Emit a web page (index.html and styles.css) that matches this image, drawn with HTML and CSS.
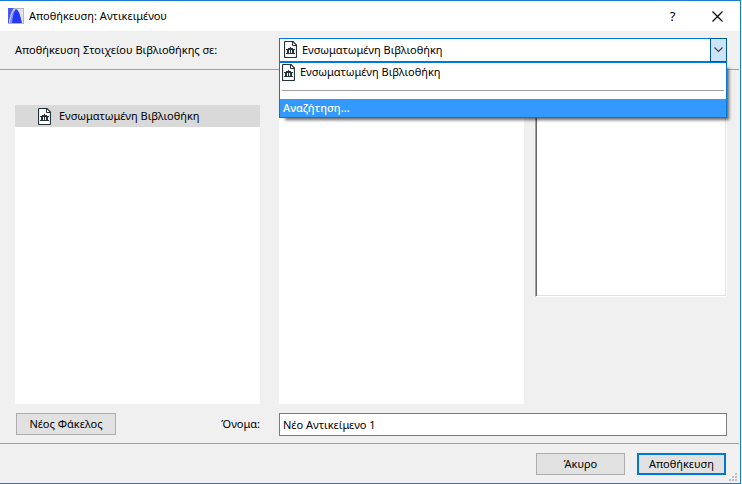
FILE: index.html
```html
<!DOCTYPE html>
<html lang="el">
<head>
  <meta charset="UTF-8">
  <meta name="viewport" content="width=device-width, initial-scale=1.0">
  <title>Αποθήκευση: Αντικειμένου</title>
  <link rel="stylesheet" href="styles.css">
</head>
<body>
  <!-- Shared library icon -->
  <svg class="sprite" aria-hidden="true">
    <symbol id="library" viewBox="0 0 13 17">
      <path d="M1.5 .5H9L12.5 4V15.5Q12.5 16.5 11.5 16.5H1.5Q.5 16.5 .5 15.5V1.5Q.5 .5 1.5 .5Z" fill="#fff" stroke="#25323a" stroke-width="1.2"/>
      <path d="M8.5 1V4.5H12" fill="none" stroke="#25323a"/>
      <path d="M6 6H7V7H9V8H11V9H2V8H4V7H6ZM3 9H5V12H3ZM6 9H7V12H6ZM8 9H10V12H8ZM2 12H11V13H2Z" fill="#25323a"/>
    </symbol>
  </svg>

  <div class="dialog">
    <!-- Title bar -->
    <header class="titlebar">
      <svg class="app-icon" viewBox="0 0 16 16" aria-hidden="true">
        <rect x=".5" y=".5" width="15" height="15" fill="#e2e3ec" stroke="#b3b5c2"/>
        <path d="M0 0H6Q2 5 1 15H0Z" fill="#4a58f0"/>
        <path d="M1 15Q2 4 7 1L5 15Z" fill="#7c8af5"/>
        <path d="M4 15Q6 1 8 1Q11 1 14 15Z" fill="#2438f5"/>
        <path d="M1.5 15Q3 4 7 1.5" fill="none" stroke="#c3c9ff"/>
      </svg>
      <h1>Αποθήκευση: Αντικειμένου</h1>
      <button class="window-btn" type="button" aria-label="Βοήθεια">?</button>
      <button class="window-btn" type="button" aria-label="Κλείσιμο">
        <svg width="11" height="11" viewBox="0 0 11 11"><path d="M.5 .5L10.5 10.5M10.5 .5L.5 10.5" stroke="#000" stroke-width="1.2"/></svg>
      </button>
    </header>

    <!-- Location -->
    <div class="location">
      <label for="location">Αποθήκευση Στοιχείου Βιβλιοθήκης σε:</label>
      <div class="combo">
        <select id="location">
          <option>Ενσωματωμένη Βιβλιοθήκη</option>
          <option>Αναζήτηση...</option>
        </select>
        <svg class="library-icon combo-icon" aria-hidden="true"><use href="#library"/></svg>
        <span class="combo-arrow">
          <svg width="9" height="6" viewBox="0 0 9 6"><path d="M.5 .5L4.5 4.5L8.5 .5" fill="none" stroke="#444" stroke-width="1.2"/></svg>
        </span>
        <ul class="combo-list" role="listbox" aria-label="Θέση">
          <li role="option">
            <svg class="library-icon" aria-hidden="true"><use href="#library"/></svg>
            Ενσωματωμένη Βιβλιοθήκη
          </li>
          <li class="separator" role="presentation"></li>
          <li class="active" role="option" aria-selected="true">Αναζήτηση...</li>
        </ul>
      </div>
    </div>

    <!-- Folder panes -->
    <main class="panes">
      <ul class="pane">
        <li class="folder selected">
          <svg class="library-icon" aria-hidden="true"><use href="#library"/></svg>
          Ενσωματωμένη Βιβλιοθήκη
        </li>
      </ul>
      <div class="pane pane-files"></div>
      <div class="preview"></div>
    </main>

    <!-- Name -->
    <div class="name-row">
      <div class="name-left">
        <button class="btn btn-folder" type="button">Νέος Φάκελος</button>
        <label for="name">Όνομα:</label>
      </div>
      <input type="text" id="name" value="Νέο Αντικείμενο 1">
    </div>

    <!-- Actions -->
    <footer class="actions">
      <button class="btn" type="button">Άκυρο</button>
      <button class="btn btn-default" type="submit">Αποθήκευση</button>
      <svg class="grip" viewBox="0 0 8 8" aria-hidden="true"><path d="M6 0H8V2H6ZM3 3H5V5H3ZM6 3H8V5H6ZM0 6H2V8H0ZM3 6H5V8H3ZM6 6H8V8H6Z" fill="#bfbfbf"/></svg>
    </footer>
  </div>
</body>
</html>
```
FILE: styles.css
```css
* {
  box-sizing: border-box;
}

body {
  margin: 0;
  padding-right: 1px;
  background: #f0f0f0;
  color: #000;
  font: 11px/16px "Noto Sans", "Open Sans", sans-serif;
}

ul {
  margin: 0;
  padding: 0;
  list-style: none;
}

button,
input,
select {
  font: inherit;
  color: inherit;
}

.sprite {
  position: absolute;
  width: 0;
  height: 0;
}

.dialog {
  display: flex;
  flex-direction: column;
  min-height: 100vh;
  background: #f0f0f0;
  border: solid #1a7bd0;
  border-width: 1px 1px 1px 0;
}

/* Title bar */
.titlebar {
  display: flex;
  align-items: center;
  height: 30px;
  padding-left: 8px;
  background: #fff;
}

.titlebar h1 {
  flex: 1;
  margin: 0 0 0 5px;
  font-size: 11px;
  font-weight: normal;
}

.app-icon {
  width: 16px;
  height: 16px;
}

.window-btn {
  display: flex;
  align-items: center;
  justify-content: center;
  width: 45px;
  height: 30px;
  padding: 0;
  border: none;
  background: none;
  font-size: 13px;
}

/* Location */
.location {
  display: grid;
  grid-template-columns: 264fr 448fr;
  align-items: center;
  height: 39px;
  margin-right: 1px;
  padding: 0 12px 0 15px;
  border-bottom: 1px solid #a0a0a0;
}

.library-icon {
  flex: none;
  width: 13px;
  height: 17px;
}

.combo {
  position: relative;
}

.combo select {
  display: block;
  width: 100%;
  height: 24px;
  padding: 0 22px;
  border: 1px solid #0078d7;
  border-radius: 0;
  background: #fff;
  appearance: none;
}

.combo-icon {
  position: absolute;
  top: 3px;
  left: 5px;
}

.combo-arrow {
  position: absolute;
  top: 0;
  right: 0;
  display: flex;
  align-items: center;
  justify-content: center;
  width: 17px;
  height: 24px;
  border: 1px solid #00559b;
  background: #cce4f7;
  pointer-events: none;
}

.combo-list {
  position: absolute;
  z-index: 1;
  top: 24px;
  left: 0;
  right: 0;
  border: 1px solid #0078d7;
  background: #fff;
  box-shadow: 4px 4px 3px -2px rgba(0, 0, 0, 0.6);
}

.combo-list li {
  display: flex;
  align-items: center;
  gap: 5px;
  height: 18px;
  padding: 0 2px;
}

.combo-list .separator::before {
  content: "";
  flex: 1;
  height: 1px;
  background: #a0a0a0;
}

.combo-list .active {
  padding: 0 3px;
  background: #3399ff;
  color: #fff;
  font-weight: 500;
}

/* Panes */
.panes {
  flex: 1;
  display: grid;
  grid-template-columns: 245fr 264fr 203fr;
  padding: 35px 13px 0 15px;
}

.pane {
  background: #fff;
}

.pane-files {
  margin-left: 19px;
}

.preview {
  height: 192px;
  margin-left: 11px;
  border: 1px solid;
  border-color: #a0a0a0 #fff #fff #a0a0a0;
  background: #fff;
  box-shadow: inset 1px 1px #696969, inset -1px -1px #e3e3e3;
}

.folder {
  display: flex;
  align-items: center;
  gap: 8px;
  height: 22px;
  padding-left: 23px;
}

.folder.selected {
  background: #d9d9d9;
}

/* Name */
.name-row {
  display: grid;
  grid-template-columns: 264fr 448fr;
  margin-right: 1px;
  padding: 9px 12px 7px 15px;
  border-bottom: 1px solid #a0a0a0;
}

.name-left {
  display: flex;
  align-items: flex-start;
  justify-content: space-between;
  padding: 0 19px 0 1px;
}

.name-left label {
  line-height: 22px;
}

.name-row input {
  width: 100%;
  height: 23px;
  padding: 0 3px;
  border: 1px solid #7a7a7a;
  background: #fff;
}

/* Buttons */
.btn {
  width: 89px;
  height: 22px;
  padding: 0;
  border: 1px solid #adadad;
  background: #e1e1e1;
}

.btn-folder {
  width: 100px;
}

.btn-default {
  border: 2px solid #0078d7;
}

.actions {
  position: relative;
  display: flex;
  justify-content: flex-end;
  gap: 12px;
  padding: 9px 14px 8px;
}

.grip {
  position: absolute;
  right: 3px;
  bottom: 2px;
  width: 8px;
  height: 8px;
}
```
